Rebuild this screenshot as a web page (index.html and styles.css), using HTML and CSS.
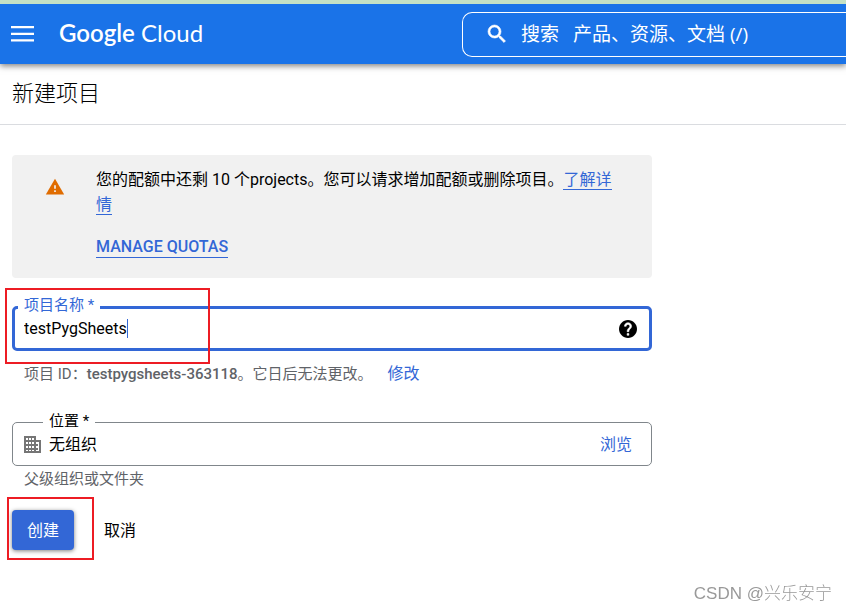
FILE: index.html
```html
<!DOCTYPE html>
<html lang="zh-CN">
<head>
    <meta charset="UTF-8">
    <meta name="viewport" content="width=device-width, initial-scale=1.0">
    <title>新建项目 - Google Cloud</title>
    <link rel="stylesheet" href="styles.css">
</head>
<body>
    <header class="topbar">
        <button class="menu-btn" type="button" aria-label="导航菜单">
            <svg width="23" height="16" viewBox="0 0 23 16"><path fill="#fff" d="M0 0h23v2.3H0zM0 6.7h23V9H0zM0 13.2h23v2.3H0z"/></svg>
        </button>
        <a class="logo" href="#"><b>Google</b> Cloud</a>
        <div class="search">
            <svg width="24" height="24" viewBox="0 0 24 24"><path fill="#fff" stroke="#fff" stroke-width=".6" d="M15.5 14h-.79l-.28-.27A6.471 6.471 0 0 0 16 9.5 6.5 6.5 0 1 0 9.5 16c1.61 0 3.09-.59 4.23-1.57l.27.28v.79l5 4.99L20.49 19l-4.99-5zm-6 0C7.01 14 5 11.99 5 9.5S7.01 5 9.5 5 14 7.01 14 9.5 11.99 14 9.5 14z"/></svg>
            <label for="search">搜索</label>
            <input id="search" type="text" placeholder="产品、资源、文档 (/)">
        </div>
    </header>

    <h1 class="title">新建项目</h1>

    <main class="content">
        <div class="notice">
            <svg class="warn" width="20" height="20" viewBox="0 0 24 24"><path fill="#e06c00" d="M1 21h22L12 2 1 21z"/><path fill="#f1f1f1" d="M11 10h2v4h-2zM11 16h2v2h-2z"/></svg>
            <div class="notice-body">
                <p>您的配额中还剩 10 个projects。您可以请求增加配额或删除项目。<a href="#">了解详情</a></p>
                <a class="quotas" href="#">MANAGE QUOTAS</a>
            </div>
        </div>

        <form class="form">
            <div class="field field-name">
                <div class="box box-active">
                    <label for="name">项目名称 *</label>
                    <input id="name" type="text" size="12" value="testPygSheets">
                    <span class="caret"></span>
                    <button class="help" type="button" aria-label="帮助">
                        <svg width="18" height="18" viewBox="2 2 20 20"><path d="M12 2C6.48 2 2 6.48 2 12s4.48 10 10 10 10-4.48 10-10S17.52 2 12 2z"/><path fill="#fff" stroke="#fff" stroke-width=".6" d="M13 19h-2v-2h2v2zm2.07-7.75l-.9.92C13.45 12.9 13 13.5 13 15h-2v-.5c0-1.1.45-2.1 1.17-2.83l1.24-1.26c.37-.36.59-.86.59-1.41 0-1.1-.9-2-2-2s-2 .9-2 2H8c0-2.21 1.79-4 4-4s4 1.79 4 4c0 .88-.36 1.68-.93 2.25z"/></svg>
                    </button>
                </div>
                <span class="mark mark-name"></span>
                <p class="hint">项目 ID：<b>testpygsheets-363118</b>。它日后无法更改。<a href="#">修改</a></p>
            </div>

            <div class="field field-place">
                <div class="box">
                    <label for="place">位置 *</label>
                    <svg width="18" height="18" viewBox="0 0 18 18"><path fill="#757575" fill-rule="evenodd" d="M0 1h12v4h5v13H0zM2 3v2h2V3zM5 3v2h2V3zM8 3v2h2V3zM2 7v2h2V7zM5 7v2h2V7zM8 7v2h2V7zM2 11v2h2v-2zM5 11v2h2v-2zM8 11v2h2v-2zM2 15v1h2v-1zM5 15v1h2v-1zM8 15v1h2v-1zM12 7v2h1v2h-1v2h1v2h-1v1h3V7z"/><path fill="#757575" d="M13 9h1v2h-1zM13 13h1v2h-1z"/></svg>
                    <input id="place" type="text" value="无组织" readonly>
                    <button class="browse" type="button">浏览</button>
                </div>
                <p class="hint">父级组织或文件夹</p>
            </div>

            <div class="actions">
                <button class="create" type="button">创建</button>
                <button class="cancel" type="button">取消</button>
                <span class="mark mark-create"></span>
            </div>
        </form>
    </main>

    <div class="watermark">CSDN @兴乐安宁</div>
</body>
</html>
```

FILE: styles.css
```css
* {
    box-sizing: border-box;
}

body {
    margin: 0;
    background: #fff;
    color: #000;
    font-family: Roboto, "Noto Sans CJK SC", sans-serif;
    font-size: 16px;
    line-height: 25px;
}

p {
    margin: 0;
}

a {
    color: #3367d6;
    text-decoration: none;
}

button,
input {
    font: inherit;
    color: inherit;
    padding: 0;
    border: none;
    outline: none;
    background: none;
}

button {
    cursor: pointer;
}

svg {
    display: block;
    flex-shrink: 0;
}

/* Top bar */
.topbar {
    display: flex;
    align-items: center;
    height: 64px;
    padding-left: 11px;
    background: #1a73e8;
    border-top: 4px solid #c5e1c5;
    box-shadow: 0 2px 6px rgba(0, 0, 0, 0.5);
    color: #fff;
}

.logo {
    margin-left: 25px;
    padding-bottom: 4px;
    color: #fff;
    font-family: Lato, sans-serif;
    font-size: 24px;
    white-space: nowrap;
}

.logo b {
    font-weight: 600;
}

.search {
    display: flex;
    align-items: center;
    flex: 0 0 384px;
    height: 45px;
    margin-left: auto;
    padding-left: 22px;
    border: 1px solid #fff;
    border-right: none;
    border-radius: 10px 0 0 10px;
    font-family: "Open Sans", "Noto Sans CJK SC", sans-serif;
    font-size: 19px;
}

.search label {
    margin: 0 14px 0 12px;
}

.search input {
    flex: 1;
    min-width: 0;
}

.search input::placeholder {
    color: #fff;
    opacity: 1;
}

/* Page title */
.title {
    margin: 0;
    padding: 15px 12px;
    border-bottom: 1px solid #dadce0;
    font-size: 22px;
    font-weight: 300;
    line-height: 30px;
}

.content {
    max-width: 664px;
    padding: 30px 12px;
}

/* Quota notice */
.notice {
    display: flex;
    padding: 12px 28px 19px 33px;
    background: #f1f1f1;
    border-radius: 4px;
}

.warn {
    margin-top: 10px;
}

.notice-body {
    margin-left: 31px;
}

.notice-body a {
    border-bottom: 1px solid #3367d6;
}

.notice-body .quotas {
    display: inline-block;
    margin-top: 20px;
    font-weight: 500;
    line-height: 20px;
}

/* Form */
.field {
    position: relative;
}

.field-name {
    margin-top: 28px;
}

.field-place {
    margin-top: 35px;
}

.box {
    position: relative;
    display: flex;
    align-items: center;
    height: 44px;
    padding: 0 19px 0 11px;
    border: 1px solid #80868b;
    border-radius: 5px;
}

.box-active {
    height: 45px;
    padding: 0 12px 0 9px;
    border: 3px solid #3367d6;
}

.box label {
    position: absolute;
    top: -14px;
    left: 30px;
    padding: 0 6px;
    background: #fff;
    font-size: 15px;
}

.box-active label {
    top: -16px;
    left: 3px;
    color: #3367d6;
}

.box input {
    flex: 1;
    min-width: 0;
    margin-left: 7px;
}

.box-active input {
    flex: none;
    field-sizing: content;
    margin-left: 0;
}

.caret {
    width: 1px;
    height: 19px;
    background: #3367d6;
}

.help {
    margin-left: auto;
}

.browse {
    color: #3367d6;
}

.hint {
    padding: 1px 0 0 12px;
    color: #5f6368;
    font-size: 15px;
}

.field-name .hint {
    padding-top: 10px;
}

.hint b {
    font-weight: 500;
}

.hint a {
    margin-left: 15px;
    font-size: 16px;
}

.actions {
    position: relative;
    display: flex;
    align-items: center;
    gap: 30px;
    margin-top: 18px;
}

.create {
    height: 40px;
    padding: 0 15px;
    background: #3367d6;
    border-radius: 4px;
    box-shadow: 0 1px 4px rgba(0, 0, 0, 0.5);
    color: #fff;
}

/* Red highlight frames */
.mark {
    position: absolute;
    border: 2px solid #ed1c24;
    pointer-events: none;
}

.mark-name {
    top: -18px;
    left: -7px;
    width: 205px;
    height: 76px;
}

.mark-create {
    top: -13px;
    left: -5px;
    width: 87px;
    height: 63px;
}

.watermark {
    position: fixed;
    right: 14px;
    bottom: 6px;
    color: #999;
    font-family: "Liberation Sans", "Noto Sans CJK SC", sans-serif;
    font-size: 17px;
    font-weight: 300;
}
```
